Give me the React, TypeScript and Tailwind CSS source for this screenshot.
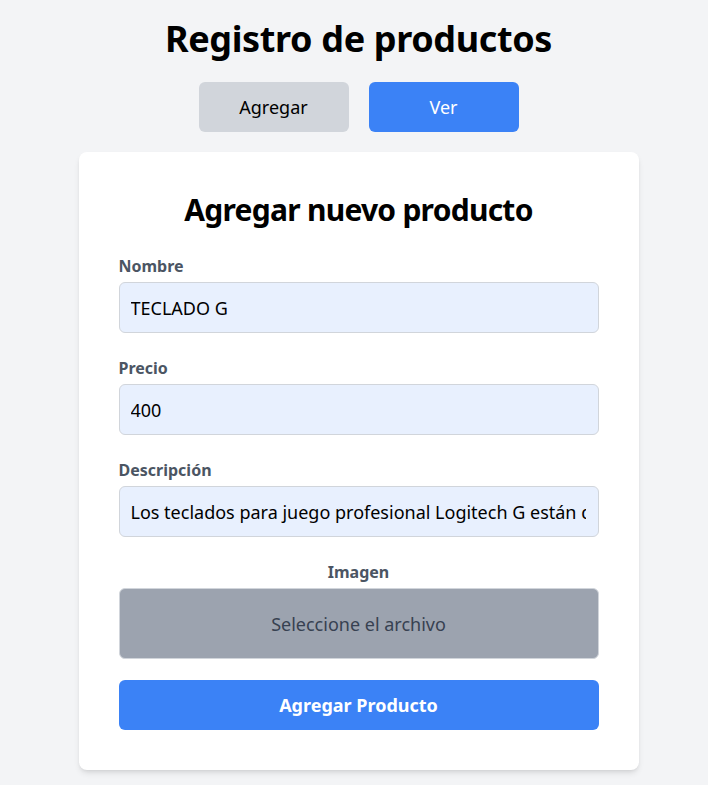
import { useState } from "react";

const font = { fontFamily: '"Segoe UI", "Noto Sans", sans-serif' };

function Field({ label, value }: { label: string; value: string }) {
  return (
    <div className="mb-[23px]">
      <label className="block text-base leading-6 font-bold text-[#4b5563] mb-1">{label}</label>
      <input
        readOnly
        value={value}
        className="w-full h-[51px] pl-[11px] pr-3 text-lg text-black bg-[#e8f0fe] border border-[#d1d5db] rounded-md outline-none"
      />
    </div>
  );
}

export default function App() {
  const [tab, setTab] = useState("agregar");

  return (
    <div style={font} className="min-h-[785px] bg-[#f3f4f6] pt-[19px] pl-[9px] flex flex-col items-center">
      <h1 className="text-4xl leading-10 font-bold tracking-[-0.01em] text-black mb-[23px]">Registro de productos</h1>

      <div className="flex gap-5 mb-[20px]">
        <button
          onClick={() => setTab("agregar")}
          className="w-[150px] h-[50px] rounded-md bg-[#d1d5db] text-lg text-black"
        >
          Agregar
        </button>
        <button
          onClick={() => setTab("ver")}
          className="w-[150px] h-[50px] rounded-md bg-[#3b82f6] text-lg text-white"
        >
          Ver
        </button>
      </div>

      {tab === "agregar" || tab === "ver" ? (
        <div className="w-[560px] bg-white rounded-lg shadow-md p-10">
          <h2 className="text-3xl leading-9 font-bold tracking-[-0.025em] text-center text-black mb-[26px]">
            Agregar nuevo producto
          </h2>

          <Field label="Nombre" value="TECLADO G" />
          <Field label="Precio" value="400" />
          <Field
            label="Descripción"
            value="Los teclados para juego profesional Logitech G están diseñados para ofrecer el máximo rendimiento"
          />

          <div className="mb-[21px]">
            <p className="text-base leading-6 font-bold text-[#4b5563] text-center mb-1">Imagen</p>
            <label className="flex items-center justify-center h-[71px] bg-[#9ca3af] border border-[#d1d5db] rounded-md text-lg text-[#374151] cursor-pointer">
              Seleccione el archivo
              <input type="file" className="hidden" />
            </label>
          </div>

          <button className="w-full h-[50px] rounded-md bg-[#3b82f6] text-lg font-bold text-white">
            Agregar Producto
          </button>
        </div>
      ) : null}
    </div>
  );
}
